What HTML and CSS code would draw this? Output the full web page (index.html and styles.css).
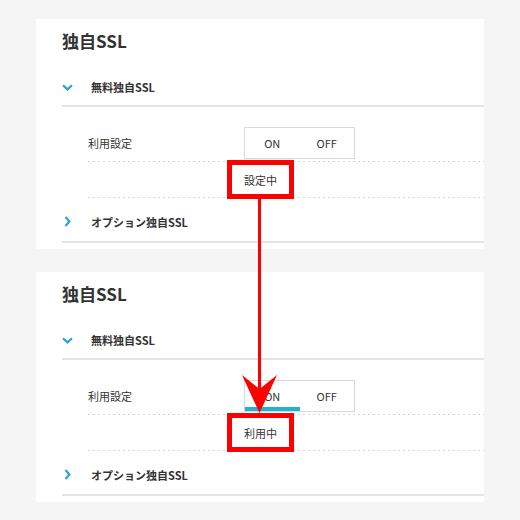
FILE: index.html
```html
<!DOCTYPE html>
<html lang="ja">
<head>
    <meta charset="UTF-8">
    <title>独自SSL</title>
    <link rel="stylesheet" href="styles.css">
</head>
<body>
<div class="page">
    <!--変更前-->
    <div class="panel">
        <h2 class="title">独自SSL</h2>
        <div class="acc open">
            <span class="chev"><svg width="11" height="7" viewBox="0 0 11 7"><path d="M1 1.2 L5.5 5.4 L10 1.2" fill="none" stroke="#27a6d5" stroke-width="2.2"/></svg></span>
            <span class="acc-name">無料独自SSL</span>
        </div>
        <div class="row">
            <div class="label">利用設定</div>
            <div class="toggle">
                <span>ON</span>
                <span>OFF</span>
            </div>
        </div>
        <div class="row status-row">
            <div class="label"></div>
            <div class="status"><span class="hl">設定中</span></div>
        </div>
        <div class="acc">
            <span class="chev"><svg width="7" height="11" viewBox="0 0 7 11"><path d="M1.5 1 L5.4 5.5 L1.5 10" fill="none" stroke="#27a6d5" stroke-width="2.2"/></svg></span>
            <span class="acc-name">オプション独自SSL</span>
        </div>
    </div>

    <!--変更後-->
    <div class="panel">
        <h2 class="title">独自SSL</h2>
        <div class="acc open">
            <span class="chev"><svg width="11" height="7" viewBox="0 0 11 7"><path d="M1 1.2 L5.5 5.4 L10 1.2" fill="none" stroke="#27a6d5" stroke-width="2.2"/></svg></span>
            <span class="acc-name">無料独自SSL</span>
        </div>
        <div class="row">
            <div class="label">利用設定</div>
            <div class="toggle">
                <span class="on">ON</span>
                <span>OFF</span>
            </div>
        </div>
        <div class="row status-row">
            <div class="label"></div>
            <div class="status"><span class="hl">利用中</span></div>
        </div>
        <div class="acc">
            <span class="chev"><svg width="7" height="11" viewBox="0 0 7 11"><path d="M1.5 1 L5.4 5.5 L1.5 10" fill="none" stroke="#27a6d5" stroke-width="2.2"/></svg></span>
            <span class="acc-name">オプション独自SSL</span>
        </div>
    </div>
</div>

<!--赤い矢印-->
<svg class="arrow" width="520" height="520" viewBox="0 0 520 520">
    <line x1="259.5" y1="198" x2="259.5" y2="392" stroke="#ff0000" stroke-width="3"/>
    <polygon points="242,375 259.5,389 277,375 259.5,413" fill="#ff0000"/>
</svg>
</body>
</html>
```

FILE: styles.css
```css
*{
    margin: 0;
    padding: 0;
    box-sizing: border-box;
}

body{
    background-color: #f5f5f5;
    font-family: "Noto Sans CJK JP", "Noto Sans", sans-serif;
    color: #333333;
    width: 520px;
    height: 520px;
    overflow: hidden;
}

.page{
    padding-top: 19px;
    display: flex;
    flex-direction: column;
    gap: 23px;
}

.panel{
    width: 448px;
    height: 230px;
    margin-left: 36px;
    padding-left: 26px;
    background-color: #ffffff;
}

.title{
    font-size: 17px;
    font-weight: bold;
    line-height: 20px;
    padding: 12px 0 18px;
}

.acc{
    height: 38px;
    display: flex;
    align-items: center;
    border-bottom: 2px solid #e4e4e4;
}
.acc:last-child{
    height: 45px;
    padding-top: 4px;
}

.chev{
    width: 29px;
    display: flex;
    align-items: center;
}
.acc:last-child .chev{
    padding-left: 2px;
}

.acc-name{
    font-size: 11px;
    font-weight: bold;
    line-height: 14px;
}

.row{
    margin-left: 26px;
    display: flex;
    align-items: center;
    padding: 20px 0 3px;
    background: linear-gradient(to right, #d6d6d6 2px, transparent 2px) left bottom / 5px 1px repeat-x;
}

.label{
    width: 156px;
    font-size: 11px;
    line-height: 14px;
}

.toggle{
    width: 111px;
    height: 32px;
    border: 1px solid #d9d9d9;
    display: flex;
}
.toggle span{
    flex: 1;
    font-size: 11px;
    line-height: 30px;
    text-align: center;
}
.toggle span.on{
    box-shadow: inset 0 -4px #1fb3d3;
}

.status-row{
    height: 36px;
    padding: 0;
}

.status{
    font-size: 11px;
    line-height: 14px;
}

.hl{
    position: relative;
    display: inline-block;
}
.hl::after{
    content: "";
    position: absolute;
    left: -17px;
    right: -17px;
    top: -13px;
    bottom: -12px;
    border: 5px solid #ff0000;
}

.arrow{
    position: absolute;
    left: 0;
    top: 0;
}
```
